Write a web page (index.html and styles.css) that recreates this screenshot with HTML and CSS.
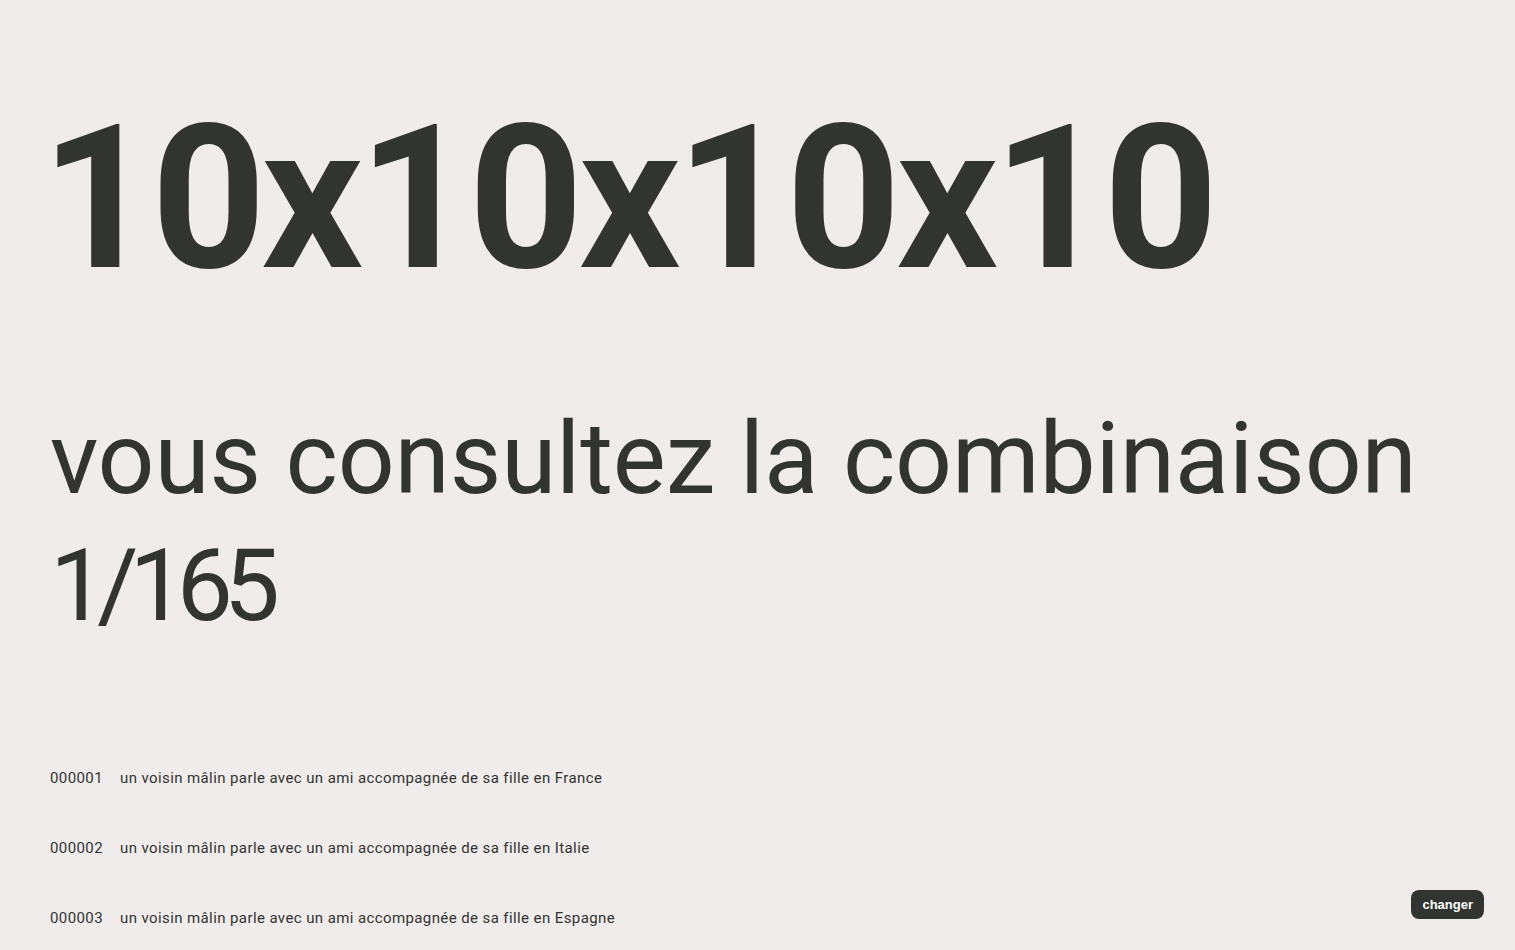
FILE: index.html
```html
<!DOCTYPE html>
<html lang="fr">
<head>
<meta charset="utf-8">
<title>10x10x10x10</title>
<link rel="stylesheet" href="styles.css">
</head>
<body>
<main class="page">
  <h1 class="title">10x10x10x10</h1>
  <p class="subtitle">vous consultez la combinaison<br><span class="count">1/165</span></p>
  <ul class="list">
    <li class="row"><span class="num">000001</span><span class="txt">un voisin mâlin parle avec un ami accompagnée de sa fille en France</span></li>
    <li class="row"><span class="num">000002</span><span class="txt">un voisin mâlin parle avec un ami accompagnée de sa fille en Italie</span></li>
    <li class="row"><span class="num">000003</span><span class="txt">un voisin mâlin parle avec un ami accompagnée de sa fille en Espagne</span></li>
  </ul>
</main>
<button class="change">changer</button>
</body>
</html>
```
FILE: styles.css
```css
html, body {
  margin: 0;
  padding: 0;
  background: #f1ecec;
  color: #313431;
  font-family: Roboto, "Noto Sans", sans-serif;
  height: 100%;
  overflow: hidden;
}
.page {
  padding: 0 50px;
}
.title {
  margin: 0 0 0 -9px;
  padding-top: 89px;
  font-size: 200px;
  font-weight: 700;
  line-height: 220px;
  letter-spacing: -4.6px;
}
.subtitle {
  margin: 86px 0 0;
  font-size: 100px;
  font-weight: 400;
  line-height: 127px;
  letter-spacing: -0.15px;
}
.count {
  letter-spacing: -9px;
}
.list {
  list-style: none;
  margin: 119px 0 0;
  padding: 0;
}
.row {
  font-size: 15px;
  line-height: 20px;
  margin-bottom: 50px;
  letter-spacing: 0.4px;
  display: flex;
  gap: 17px;
}
.change {
  position: fixed;
  right: 31px;
  bottom: 31px;
  background: #313431;
  color: #fff;
  border: none;
  border-radius: 8px;
  font-family: "Liberation Sans", Arial, sans-serif;
  font-weight: 700;
  font-size: 13px;
  padding: 0 11px;
  height: 29px;
}
```
